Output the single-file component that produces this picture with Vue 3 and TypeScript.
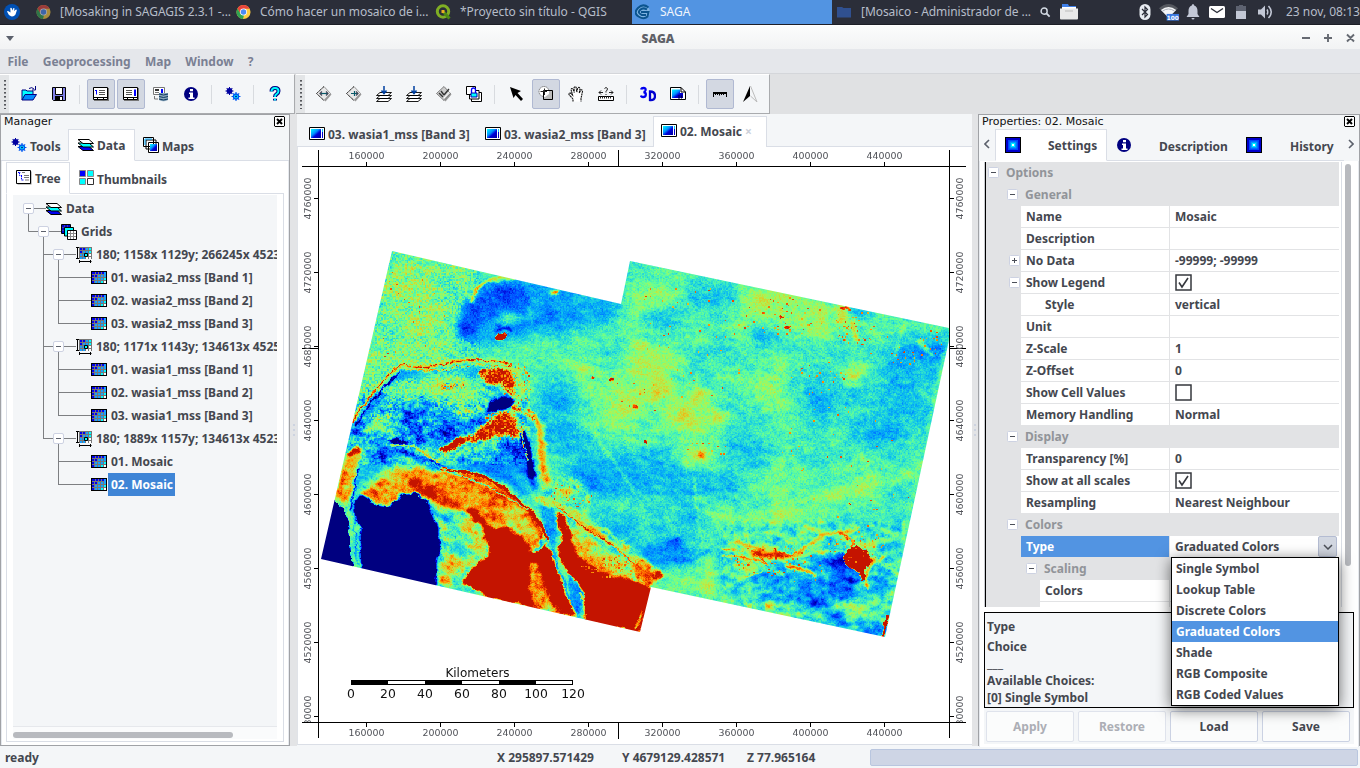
<script setup lang="ts">
import { onMounted, ref } from 'vue'

type Pt = [number, number]

/* ---------- window chrome data ---------- */
const menus = ['File', 'Geoprocessing', 'Map', 'Window', '?']

interface Tool { icon?: string; on?: boolean; sep?: boolean }
const sep: Tool = { sep: true }
const fileTools: Tool[] = [
  { icon: 'open' }, { icon: 'save' }, sep,
  { icon: 'mgr', on: true }, { icon: 'props', on: true }, { icon: 'source' }, { icon: 'info' }, sep,
  { icon: 'gears' }, sep, { icon: 'help' },
]
const mapTools: Tool[] = [
  { icon: 'prev' }, { icon: 'next' }, { icon: 'stack' }, { icon: 'stack' }, { icon: 'pick' }, { icon: 'sync' }, sep,
  { icon: 'arrow' }, { icon: 'zoomsel', on: true }, { icon: 'hand' }, { icon: 'measure' }, sep,
  { icon: 'threed' }, { icon: 'page' }, sep,
  { icon: 'ruler', on: true }, { icon: 'north' },
]

/* ---------- data tree ---------- */
interface Row { level: number; text: string; icon: string; box: boolean; v: string; selected?: boolean }
const rows: Row[] = []
function addRow(level: number, text: string, icon: string, box: boolean, v: string, selected = false) {
  rows.push({ level, text, icon, box, v, selected })
}
addRow(0, 'Data', 'layers', true, 'M15.5 12V23M20 11.500H33')
addRow(1, 'Grids', 'grids', true, 'M15.5 0V11.500H48M30.500 12V23')
const systems = [
  { name: '180; 1158x 1129y; 266245x 4523054y', items: ['01. wasia2_mss [Band 1]', '02. wasia2_mss [Band 2]', '03. wasia2_mss [Band 3]'] },
  { name: '180; 1171x 1143y; 134613x 4525934y', items: ['01. wasia1_mss [Band 1]', '02. wasia1_mss [Band 2]', '03. wasia1_mss [Band 3]'] },
  { name: '180; 1889x 1157y; 134613x 4523054y', items: ['01. Mosaic', '02. Mosaic'] },
]
systems.forEach((s, i) => {
  const last = i === systems.length - 1
  addRow(2, s.name, 'system', true, `M30.500 0V${last ? 12 : 23}M30.500 11.500H63M45.500 12V23`)
  s.items.forEach((t, j) => {
    const end = j === s.items.length - 1
    addRow(3, t, 'grid', false, `${last ? '' : 'M30.500 0V23'}M45.500 0V${end ? 12 : 23}M45.500 11.500H78`, last && end)
  })
})

/* ---------- property grid ---------- */
interface Prop { kind: 'cat' | 'row'; level: number; name: string; value?: string; box?: string; check?: boolean; indent?: boolean; selected?: boolean }
const props: Prop[] = [
  { kind: 'cat', level: 0, name: 'Options' },
  { kind: 'cat', level: 1, name: 'General' },
  { kind: 'row', level: 1, name: 'Name', value: 'Mosaic' },
  { kind: 'row', level: 1, name: 'Description' },
  { kind: 'row', level: 1, name: 'No Data', value: '-99999; -99999', box: '+' },
  { kind: 'row', level: 1, name: 'Show Legend', check: true, box: '-' },
  { kind: 'row', level: 1, name: 'Style', value: 'vertical', indent: true },
  { kind: 'row', level: 1, name: 'Unit' },
  { kind: 'row', level: 1, name: 'Z-Scale', value: '1' },
  { kind: 'row', level: 1, name: 'Z-Offset', value: '0' },
  { kind: 'row', level: 1, name: 'Show Cell Values', check: false },
  { kind: 'row', level: 1, name: 'Memory Handling', value: 'Normal' },
  { kind: 'cat', level: 1, name: 'Display' },
  { kind: 'row', level: 1, name: 'Transparency [%]', value: '0' },
  { kind: 'row', level: 1, name: 'Show at all scales', check: true },
  { kind: 'row', level: 1, name: 'Resampling', value: 'Nearest Neighbour' },
  { kind: 'cat', level: 1, name: 'Colors' },
  { kind: 'row', level: 1, name: 'Type', value: 'Graduated Colors', selected: true },
  { kind: 'cat', level: 2, name: 'Scaling' },
  { kind: 'row', level: 2, name: 'Colors' },
  { kind: 'row', level: 2, name: 'Value Range', box: '-' },
]
const choices = ['Single Symbol', 'Lookup Table', 'Discrete Colors', 'Graduated Colors', 'Shade', 'RGB Composite', 'RGB Coded Values']

/* ---------- map rulers (svg origin = page 297,147) ---------- */
const xTicks = [160000, 200000, 240000, 280000, 320000, 360000, 400000, 440000].map((v, i) => ({ v, x: 69.500 + i * 74 }))
const yTicks = [4760000, 4720000, 4680000, 4640000, 4600000, 4560000, 4520000, 4480000].map((v, i) => ({ v, y: 51.500 + i * 74 }))
const scaleTicks = [0, 20, 40, 60, 80, 100, 120].map((v, i) => ({ v, x: 54 + i * 37 }))

/* ---------- raster ---------- */
const raster = ref<HTMLCanvasElement | null>(null)
const W = 630
const H = 555
const OX = 319
const OY = 167

const stops: [number, number, number, number][] = [
  [0, 0, 0, 128], [0.1, 0, 0, 210], [0.2, 0, 70, 255], [0.3, 0, 145, 255], [0.38, 15, 195, 235],
  [0.46, 60, 235, 195], [0.53, 105, 255, 145], [0.61, 170, 245, 85], [0.7, 220, 205, 40],
  [0.78, 255, 155, 0], [0.87, 250, 90, 0], [0.94, 225, 40, 0], [1, 196, 20, 0],
]
function ramp(v: number): [number, number, number] {
  if (v <= 0) return [0, 0, 128]
  if (v >= 1) return [196, 20, 0]
  let i = 1
  while (stops[i][0] < v) i++
  const a = stops[i - 1], b = stops[i], t = (v - a[0]) / (b[0] - a[0])
  return [a[1] + (b[1] - a[1]) * t, a[2] + (b[2] - a[2]) * t, a[3] + (b[3] - a[3]) * t]
}
function hash(x: number, y: number, s: number): number {
  let h = (Math.imul(x, 374761393) + Math.imul(y, 668265263) + Math.imul(s, 1274126177)) | 0
  h = Math.imul(h ^ (h >>> 13), 1274126177)
  h = Math.imul(h ^ (h >>> 15), 2246822519)
  return ((h ^ (h >>> 16)) >>> 0) / 4294967295 - 0.5
}
function noise(x: number, y: number, s: number): number {
  const xi = Math.floor(x), yi = Math.floor(y)
  let u = x - xi, w = y - yi
  u = u * u * (3 - 2 * u)
  w = w * w * (3 - 2 * w)
  const a = hash(xi, yi, s), b = hash(xi + 1, yi, s), c = hash(xi, yi + 1, s), d = hash(xi + 1, yi + 1, s)
  return a + (b - a) * u + (c - a) * w + (a - b - c + d) * u * w
}

/* values -0.3 .. 1.3 are painted as grey levels and decoded afterwards */
const grey = (v: number, a = 1) => {
  const g = Math.round(((v + 0.3) / 1.6) * 255)
  return `rgba(${g},${g},${g},${a})`
}
const pts = (s: string): Pt[] => s.trim().split(' ').map(p => p.split(',').map(Number) as Pt)

function paint(c: CanvasRenderingContext2D) {
  const area = (s: string, v: number, blur = 1, a = 1) => {
    c.filter = blur ? `blur(${blur}px)` : 'none'
    c.fillStyle = grey(v, a)
    c.beginPath()
    pts(s).forEach(([x, y], i) => (i ? c.lineTo(x, y) : c.moveTo(x, y)))
    c.closePath()
    c.fill()
  }
  const line = (s: string, v: number, w: number, blur = 0.5, a = 1) => {
    c.filter = blur ? `blur(${blur}px)` : 'none'
    c.strokeStyle = grey(v, a)
    c.lineWidth = w
    c.lineJoin = c.lineCap = 'round'
    const p = pts(s)
    c.beginPath()
    c.moveTo(p[0][0], p[0][1])
    for (let i = 1; i < p.length - 1; i++) {
      c.quadraticCurveTo(p[i][0], p[i][1], (p[i][0] + p[i + 1][0]) / 2, (p[i][1] + p[i + 1][1]) / 2)
    }
    c.lineTo(p[p.length - 1][0], p[p.length - 1][1])
    c.stroke()
  }
  const spot = (x: number, y: number, rx: number, ry: number, v: number, blur = 5, a = 1, rot = 0) => {
    c.filter = blur ? `blur(${blur}px)` : 'none'
    c.fillStyle = grey(v, a)
    c.beginPath()
    c.ellipse(x, y, rx, ry, rot, 0, 7)
    c.fill()
  }

  c.filter = 'none'
  c.fillStyle = grey(0.485)
  c.fillRect(OX, OY, W, H)

  // eastern plain
  spot(655, 365, 28, 22, 0.6, 9); spot(640, 352, 10, 12, 0.68, 6); spot(625, 405, 24, 22, 0.6, 9)
  spot(690, 415, 32, 26, 0.59, 9); spot(684, 412, 8, 10, 0.7, 4); spot(660, 390, 12, 12, 0.66, 6)
  spot(700, 395, 12, 6, 0.66, 4); spot(722, 416, 12, 4, 0.68, 3); spot(695, 457, 22, 10, 0.62, 6)
  spot(745, 325, 18, 20, 0.58, 8); spot(780, 303, 40, 14, 0.62, 7, 1, 0.2); spot(820, 318, 30, 20, 0.59, 8)
  spot(770, 385, 16, 28, 0.57, 8, 1, 0.5); spot(660, 290, 30, 14, 0.56, 8); spot(582, 370, 16, 14, 0.58, 7)
  spot(635, 310, 12, 30, 0.54, 8)
  spot(660, 320, 22, 9, 0.4, 7); spot(710, 300, 26, 10, 0.42, 7); spot(762, 338, 12, 8, 0.36, 6)
  spot(555, 400, 22, 30, 0.38, 9); spot(565, 435, 22, 24, 0.38, 9); spot(595, 480, 34, 26, 0.36, 10)
  spot(645, 475, 40, 24, 0.36, 10); spot(700, 487, 40, 18, 0.37, 9); spot(745, 450, 20, 16, 0.39, 8)
  spot(850, 400, 50, 20, 0.41, 10, 1, -0.3); spot(875, 430, 24, 16, 0.34, 8); spot(915, 360, 36, 26, 0.37, 9)
  spot(820, 395, 20, 12, 0.37, 7); spot(938, 352, 10, 12, 0.28, 5); spot(855, 374, 14, 8, 0.62, 4, 1, -0.7)
  spot(625, 530, 50, 22, 0.42, 10); spot(910, 400, 30, 24, 0.38, 8)
  spot(720, 520, 26, 12, 0.56, 7); spot(780, 515, 50, 9, 0.57, 7, 1, -0.15)
  spot(850, 490, 46, 7, 0.62, 6, 1, -0.3); spot(905, 475, 24, 5, 0.6, 4, 1, -0.35); spot(690, 515, 18, 14, 0.38, 6)
  line('845,300 842,325', 0.68, 3, 2, 0.8); line('905,325 898,345 894,360', 0.66, 2, 1.5, 0.7)
  line('918,340 928,350 932,356', 0.68, 2.5, 1.5, 0.8); line('852,322 857,340', 0.74, 3, 1.5)
  spot(842, 310, 6, 12, 0.68, 3); spot(845, 308, 4, 2, 0.98, 0.6); spot(862, 312, 12, 5, 0.33, 3)
  line('590,425 605,450 640,500 650,530', 0.52, 1.5, 0.8); line('695,480 698,530 708,560 710,590', 0.58, 1.5, 0.8)
  line('700,495 720,530 750,570 790,605', 0.56, 3, 2); line('948,345 935,400 915,485 890,600', 0.54, 3, 2)
  spot(787, 327, 3, 2, 0.97, 0.5); spot(782, 317, 2, 2, 0.95, 0.5); spot(593, 378, 2, 1, 1, 0.4); spot(612, 380, 3, 1.5, 1, 0.4)
  spot(635, 406, 2.500, 1.500, 0.92, 0.6); spot(645, 441, 2, 2, 1, 0.5); spot(702, 455, 4, 3, 0.84, 1.2); spot(850, 504, 1.500, 1.500, 1, 0.3)

  // south-eastern hills
  spot(670, 555, 28, 14, 0.34, 5); spot(676, 542, 8, 5, 0.2, 3); line('650,545 665,560 690,562 710,550', 0.25, 2, 1.5)
  spot(708, 580, 10, 18, 0.62, 5); spot(685, 580, 22, 8, 0.52, 5); spot(740, 562, 14, 20, 0.56, 6)
  spot(800, 580, 45, 22, 0.36, 7); spot(842, 575, 20, 24, 0.19, 5); spot(815, 602, 17, 8, 0.19, 4)
  spot(838, 615, 8, 12, 0.22, 4); spot(880, 575, 14, 20, 0.35, 5); spot(874, 630, 16, 7, 0.22, 4)
  spot(822, 580, 8, 14, 0.4, 4, 1, 0.6)
  spot(852, 608, 20, 5, 0.62, 3, 1, 0.1); line('765,585 790,605 795,612', 0.42, 4, 3); spot(770, 605, 6, 4, 0.75, 2)
  area('745,552 758,548 775,549 788,556 785,562 765,560', 0.76, 2)
  line('730,543 750,542 757,552 790,558 810,545 825,533 850,532 858,528', 0.76, 3, 0.8)
  line('755,554 775,556 786,555', 0.98, 4, 1); line('775,549 776,560', 0.95, 2, 0.6)
  line('752,551 762,560 768,564', 0.9, 2, 0.5); line('780,552 786,558 795,552', 0.86, 2, 0.6)
  line('790,557 825,550 845,552', 0.74, 2, 0.8); line('787,567 805,568 815,575', 0.9, 3, 0.8)
  line('722,555 755,558 765,565', 0.78, 1.4, 0.4); line('740,570 765,566 785,575', 0.64, 1.5, 0.8)
  line('745,576 762,571', 0.7, 1.2, 0.4); line('735,565 752,561', 0.72, 1.2, 0.4); line('722,548 742,552', 0.74, 1.2, 0.4)
  line('840,540 855,545 872,540 885,532', 0.6, 3, 2); line('855,550 885,540 900,535', 0.62, 4, 2)
  line('838,532 852,536 852,548', 0.85, 1.5, 0.5)
  area('845,552 850,548 856,546 862,550 868,551 869,556 873,560 867,566 864,570 864,580 861,580 859,572 853,570 845,563 843,558', 1.25, 0.6)
  line('868,558 877,556 868,568 864,580 868,588', 0.85, 2.5, 0.8); line('872,562 878,562 884,556', 0.9, 2, 0.8)
  line('875,560 890,565 897,573', 0.63, 3, 1.5)

  // north-western plain and lake
  area('392,251 470,268 466,300 452,345 430,366 365,390 350,420 340,440', 0.54, 4)
  spot(405, 300, 16, 30, 0.57, 8); spot(430, 310, 20, 20, 0.57, 8)
  area('475,285 500,276 560,278 600,288 620,303 612,328 585,325 560,332 525,335 495,345 462,338 460,315', 0.35, 6)
  area('466,302 495,287 530,292 535,325 515,328 500,318 478,322 470,338 460,335', 0.24, 4)
  line('480,285 510,288 530,300 535,325', 0.2, 4, 3); spot(505, 297, 14, 5, 0.19, 4); spot(465, 325, 4, 12, 0.18, 3)
  spot(510, 318, 14, 5, 0.54, 3); spot(530, 316, 5, 8, 0.44, 3); spot(545, 313, 12, 6, 0.26, 4)
  line('470,302 475,290 490,279 515,278', 0.72, 3, 1.2); spot(555, 292, 4, 2, 0.85, 1)
  line('495,330 503,326 512,330', 0.06, 2.5, 1); spot(501, 336, 6, 3, 1.3, 0.5, 1, -0.2)

  // wetland
  area('375,395 410,372 480,368 520,375 530,410 530,460 505,480 450,470 400,440 345,455', 0.42, 5)
  line('345,430 365,395 405,372 430,375 480,372', 0.28, 6, 3)
  spot(450, 388, 34, 12, 0.62, 6); spot(400, 390, 20, 8, 0.58, 5); spot(460, 400, 20, 8, 0.56, 5)
  spot(370, 408, 5, 20, 0.23, 4, 1, 0.6); spot(355, 430, 7, 12, 0.2, 4, 1, 0.6)
  spot(380, 420, 12, 8, 0.46, 5)
  area('395,425 412,408 440,405 490,418 500,400 515,398 512,410 485,430 445,445 430,450 415,435', 0.28, 5)
  spot(408, 415, 4, 12, 0.14, 3, 1, 0.5); spot(420, 438, 5, 7, 0.1, 3); spot(450, 428, 14, 4, 0.14, 3)
  spot(430, 420, 9, 4, 0.42, 3); spot(465, 413, 14, 5, 0.46, 3); spot(425, 410, 3, 8, 0.17, 2, 1, 0.7)
  spot(440, 408, 12, 4, 0.46, 3)
  line('355,427 372,400 398,372', 0.05, 1.8, 0.6)
  line('350,425 372,392 397,366 410,365 425,369 445,363 472,360 500,361 522,370', 0.65, 4.5, 1.8)
  line('352,423 374,390 398,364 410,365 425,369 445,363 472,360 500,361 512,365', 0.98, 1.2, 0.2)
  line('405,369 430,373 470,364 505,366', 0.75, 1, 0.4)
  area('483,368 510,370 515,378 514,395 508,392 500,384 486,383 478,372', 0.98, 1.5)
  area('490,402 500,398 513,399 513,406 500,409 486,414', -0.1, 1.2)
  line('513,372 522,382 521,398 514,410', 0.68, 5, 2.5); line('508,385 514,395', 0.92, 5, 1.5)
  area('440,453 452,442 468,437 480,430 491,420 499,411 511,412 516,426 523,440 505,434 488,439 465,443 450,452', 1.0, 1.5)
  line('443,450 455,444 463,440', 1.25, 5, 0.8)
  area('495,442 520,440 528,460 532,485 518,470 500,455', 0.22, 4); line('505,440 520,455', 0.08, 3, 2)
  line('522,434 528,448 530,470 532,476', -0.15, 6, 1.2); line('530,470 535,488', 0.1, 4, 2)
  line('519,425 524,442 527,460', 0.7, 1.5, 0.5)
  line('515,408 530,412 540,425 542,445 542,470 549,482', 0.72, 6.5, 1.8); line('532,414 541,428 541,465', 0.82, 2.5, 1.2)
  area('455,462 500,458 520,480 535,505 520,492 500,480 480,473', 0.3, 3)
  line('450,456 490,452', 0.42, 6, 3)
  spot(370, 460, 10, 18, 0.38, 4); spot(390, 452, 22, 5, 0.25, 3); spot(383, 458, 5, 4, 0.08, 2); spot(398, 442, 9, 2.5, 0.04, 1)
  line('404,452 425,460 440,468 470,474', 0.14, 5, 2); spot(398, 463, 14, 3, 0.32, 2)
  line('392,446 405,443 420,451 437,463', 0.68, 1.6, 0.6)

  // coast
  area('350,440 372,445 380,470 362,500 340,505', 0.38, 4)
  area('343,462 352,450 362,448 358,470 352,490 347,508 336,499', 0.74, 2); spot(354, 452, 8, 3, 1.1, 1, 1, -0.5)
  line('338,495 344,475 350,460', 0.86, 3, 1.2)
  area('360,494 385,476 402,468 420,467 440,475 470,473 500,484 522,502 540,522 548,540 540,552 520,545 495,530 470,513 440,506 420,497 402,494 390,507 375,503', 0.82, 2)
  line('362,488 385,472 405,467', 0.6, 5, 2.5); line('435,474 460,472', 0.7, 5, 2)
  spot(395, 483, 14, 7, 0.72, 4); spot(410, 480, 8, 5, 0.88, 3); spot(470, 478, 12, 3, 0.88, 2)
  area('428,500 470,513 488,530 486,548 478,562 455,577 436,586 440,540', 0.56, 2.5)
  line('430,508 450,522', 0.15, 3, 2); spot(460, 550, 7, 9, 0.37, 3); spot(470, 527, 9, 12, 0.64, 4)
  spot(452, 565, 9, 7, 0.85, 3, 1, -0.6); spot(445, 580, 7, 4, 0.8, 2); spot(438, 545, 2, 14, 0.6, 2)
  area('475,508 482,524 492,530 507,527 523,538 535,552 543,546 552,552 566,590 575,617 530,607 490,598 462,582 470,570 488,556 490,545 482,536 488,530', 1.22, 1.2)
  area('408,480 420,480 440,496 466,508 450,508 425,497', 1.06, 3); line('470,512 482,520 488,532', 1.15, 8, 1.5)
  area('505,504 520,508 535,528 540,542 525,540 508,528', 0.66, 3)
  line('523,504 535,518 542,535 546,550', 0.98, 2.5, 1)
  area('528,562 536,560 546,590 557,612 532,607', 0.76, 2.5); spot(550, 612, 12, 3, 0.6, 2)
  area('539,501 553,509 557,525 556,545 551,551 547,541 543,520', 0.31, 1.5)
  line('534,552 546,538', 0.2, 2.5, 0.8); line('536,545 530,552', 0.7, 2, 0.8)
  line('440,468 470,472 497,483 517,498 538,520 548,538', 1.2, 2.6, 0.4); line('430,464 470,478 510,498 528,510', 0.42, 1.2, 0.5)
  area('556,511 566,519 571,535 578,553 600,571 625,576 652,588 641,633 586,621 583,590 568,573 558,555 562,537', 1.2, 1.2)
  area('570,525 600,545 635,570 625,578 600,572 583,560 573,545', 0.66, 2); line('576,545 595,567 625,578', 0.86, 5, 2)
  line('552,550 558,568 566,590 577,613', 0.32, 3, 0.6); line('551,552 561,580 573,612', 0.68, 1.3, 0.4)
  area('567,574 578,583 583,592 580,610 577,618 570,590', 0.3, 1.2); line('580,593 583,605 587,618', 0.68, 2, 0.6)
  line('540,500 560,502 577,520 600,536 622,548 640,566 655,572', 0.7, 7, 2)
  line('556,506 577,523 602,538 620,550 634,567 648,572', 0.95, 1.3, 0.4); line('585,518 610,533 628,548', 0.78, 2, 1)
  line('543,485 555,482 565,474 571,484 582,485 590,502 583,512', 0.68, 3, 2); spot(563, 492, 16, 11, 0.57, 5)
  area('630,565 645,560 652,565 655,578 648,586 638,580', 0.88, 1.6); spot(657, 576, 5, 4, 1.02, 1)
  line('636,630 642,612', 0.65, 3, 1)

  // open water and the channel between the basins
  area('335,501 343,508 349,522 350,545 353,570 318,562 318,540', -0.3, 0.7)
  area('353,503 362,496 374,504 388,507 392,502 399,500 402,494 417,493 427,502 433,516 438,527 439,550 436,562 435,590 362,572 360,540 361,527 355,520 352,511', -0.3, 0.8)
  line('365,455 356,480 352,500 354,520 357,545 358,570', 0.42, 3.5, 0.8); line('358,470 353,495 351,512', 0.12, 1.6, 0.5)
  line('354,520 357,545 357,565', 0.25, 1, 0.3)
  line('882,640 888,616', 1.25, 2, 0.3)
}

onMounted(() => {
  const cv = raster.value!
  const out = cv.getContext('2d')!
  const src = document.createElement('canvas')
  src.width = W
  src.height = H
  const c = src.getContext('2d', { willReadFrequently: true })!
  c.translate(-OX, -OY)
  paint(c)
  const g = c.getImageData(0, 0, W, H).data
  const img = out.createImageData(W, H)
  const clusters: [number, number, number, number, number][] = [
    [785, 315, 40, 20, 0.03], [855, 325, 20, 22, 0.06], [905, 345, 40, 22, 0.02], [820, 378, 30, 18, 0.03],
    [840, 445, 60, 40, 0.008], [705, 450, 24, 10, 0.05], [690, 340, 60, 60, 0.006], [650, 385, 40, 40, 0.008],
    [860, 500, 50, 30, 0.008], [770, 560, 40, 15, 0.07], [855, 545, 30, 18, 0.05], [400, 320, 45, 50, 0.008],
    [515, 385, 16, 24, 0.1], [500, 425, 25, 16, 0.12], [610, 566, 30, 12, 0.12], [570, 495, 22, 14, 0.05],
    [665, 295, 30, 15, 0.012], [800, 565, 60, 20, 0.015],
  ]
  const inside = (X: number, Y: number, x0: number, y0: number, x1: number, y1: number) => X > x0 && X < x1 && Y > y0 && Y < y1
  for (let y = 0; y < H; y++) {
    for (let x = 0; x < W; x++) {
      const X = x + OX, Y = y + OY
      const dx = noise(X / 6, Y / 6, 1) * 3 + noise(X / 2, Y / 2, 3) * 1.8
      const dy = noise(X / 6, Y / 6, 2) * 3 + noise(X / 2, Y / 2, 4) * 1.8
      const sx = Math.min(W - 1, Math.max(0, Math.round(x + dx)))
      const sy = Math.min(H - 1, Math.max(0, Math.round(y + dy)))
      let v = (g[(sy * W + sx) * 4] / 255) * 1.6 - 0.3
      const bx = Math.floor(X / 1.5), by = Math.floor(Y / 1.5)
      const wet = v > 0.02 && v < 0.5 && inside(X, Y, 340, 380, 530, 465) ? 1 : 0
      const plain = v > 0.4 && v < 0.7 && X < 480 && Y < 420 ? 1 : 0
      const ragged = v > 0.6 && v < 1.1 && inside(X, Y, 440, 360, 535, 458) ? 1 : 0
      const sand = v > 0.5 && v < 1.12 && inside(X, Y, 330, 465, 660, 635) ? 1 : 0
      const hills = v > 0.15 && inside(X, Y, 720, 520, 905, 635) ? 1 : 0
      v += noise(X / 28, Y / 22, 5) * 0.08
      v += noise((X + Y * 0.6) / 11, (Y - X * 0.3) / 5, 6) * (0.09 + wet * 0.12 + sand * 0.12 + hills * 0.1)
      v += noise(X / 3.500, Y / 3.500, 7) * (0.06 + wet * 0.14 + ragged * 0.25 + sand * 0.14 + hills * 0.1)
      v += hash(bx, by, 8) * (0.09 + (wet + plain) * 0.1 + ragged * 0.35) + hash(X, Y, 9) * (0.05 + sand * 0.06)
      if (v > 0.3) {
        for (const k of clusters) {
          const qx = (X - k[0]) / k[2], qy = (Y - k[1]) / k[3]
          if (qx * qx + qy * qy < 1 && hash(bx, by, 21) + 0.5 < k[4]) { v = 0.7 + (hash(bx, by, 22) + 0.5) * 0.22; break }
        }
      }
      const o = (y * W + x) * 4
      const [r, gg, b] = ramp(v)
      img.data[o] = r
      img.data[o + 1] = gg
      img.data[o + 2] = b
      img.data[o + 3] = 255
    }
  }
  // keep only the footprint of the two scenes
  const tmp = document.createElement('canvas')
  tmp.width = W
  tmp.height = H
  tmp.getContext('2d')!.putImageData(img, 0, 0)
  out.translate(-OX, -OY)
  out.beginPath()
  pts('392,251 621,304 630,261 949,328 949,340 885,637 651,587 640,632 321,559').forEach(([x, y], i) => (i ? out.lineTo(x, y) : out.moveTo(x, y)))
  out.closePath()
  out.clip()
  out.drawImage(tmp, OX, OY)
})
</script>

<template>
  <svg class="defs" width="0" height="0">
    <defs>
      <linearGradient id="gBlue" x1="0" y1="0" x2="1" y2="1"><stop offset="0" stop-color="#0ff" /><stop offset=".4" stop-color="#0090ff" /><stop offset=".6" stop-color="#0000d8" /><stop offset="1" stop-color="#0000a0" /></linearGradient>
      <g id="gear"><circle r="2.700" fill="none" stroke="currentColor" stroke-width="1.500" /><path d="M0-4.700V-2.500M0 4.700V2.500M-4.700 0H-2.500M4.700 0H2.500M-3.300-3.300L-2-2M3.300 3.300L2 2M3.300-3.300L2-2M-3.300 3.300L-2 2" stroke="currentColor" stroke-width="1.200" /></g>
      <symbol id="open" viewBox="0 0 16 16"><path d="M1 14V4h4l1 1h6v4" fill="#0ff" stroke="#000080" /><path d="M1 14L4 8.500H15.500L12 14Z" fill="#08f" stroke="#000080" /><path d="M8 2.500q3-2 5 .5M14.500 0V4H11" fill="none" stroke="#000080" /></symbol>
      <symbol id="save" viewBox="0 0 16 16"><path d="M1.500 1.500H14.500V14.500H2.500L1.500 13.500Z" fill="#8080e8" stroke="#000" /><path d="M4.500 1.500H11.500V8.500H4.500Z" fill="#fff" stroke="#000" /><path d="M4 10h8v4.500H4z" fill="#000" /><path d="M9 11h2v3H9z" fill="#fff" /></symbol>
      <symbol id="mgr" viewBox="0 0 16 16"><path d="M1 2h15v13H1z" fill="#777" /><path d="M.5 1.500H14.500V13.500H.5Z" fill="#fff" stroke="#000" stroke-width="1" /><path d="M.5 11.500H14.500M4.500 11.500v2M10.500 11.500v2" stroke="#000" /><path d="M2 4.500H4M3.500 4.500V8.500" stroke="#00f" /><path d="M6 4.500H12M6 6.500H12M6 8.500H12" stroke="#555" /></symbol>
      <symbol id="props" viewBox="0 0 16 16"><path d="M1 2h15v13H1z" fill="#777" /><path d="M.5 1.500H14.500V13.500H.5Z" fill="#fff" stroke="#000" stroke-width="1" /><path d="M.5 11.500H14.500M4.500 11.500v2M10.500 11.500v2" stroke="#000" /><path d="M11 3.500h2V10h-2z" fill="#00f" /><path d="M3 4.500H9M3 6.500H9M3 8.500H9" stroke="#555" /></symbol>
      <symbol id="source" viewBox="0 0 16 16"><path d="M.5 1.500H11.500V8.500H.5Z" fill="#fff" stroke="#777" /><path d="M2 3h4v2H2z" fill="#333" /><path d="M2 6.500h4" stroke="#777" /><path d="M8 3h2v4H8z" fill="#00f" /><path d="M6 7h9v7q-4.500 2.500-9 0z" fill="#8aa6bc" /><path d="M6 8q4.500 2 9 0M6 10.500q4.500 2 9 0M6 13q4.500 2 9 0" fill="none" stroke="#103a60" /><path d="M1.500 10v3H5" fill="none" stroke="#777" /></symbol>
      <symbol id="info" viewBox="0 0 16 16"><circle cx="8" cy="8" r="7" fill="#000080" /><path d="M7 3h3v2.200H7zM6 6.500h4v5h1.500V13H5.500v-1.500H7V8H6z" fill="#fff" /></symbol>
      <symbol id="gears" viewBox="0 0 16 16"><g transform="translate(4.500 5) scale(.85)"><use href="#gear" color="#0000a0" /><circle r="2.800" fill="#0000a0" /></g><g transform="translate(11 10.500) scale(.95)"><circle r="2.700" fill="#0ff" /><use href="#gear" color="#0058f0" /><circle r="1" fill="#00a" /></g></symbol>
      <symbol id="help" viewBox="0 0 16 16"><path d="M4.500 5.500Q4.500 2 8 2T11.500 5Q11.500 7 9.500 8.200 8 9 8 11M8 12.800v1.700" fill="none" stroke="#000080" stroke-width="4" /><path d="M4.500 5.500Q4.500 2 8 2T11.500 5Q11.500 7 9.500 8.200 8 9 8 11M8 12.800v1.700" fill="none" stroke="#0ff" stroke-width="1.900" /></symbol>
      <symbol id="prev" viewBox="0 0 16 16"><path d="M9 2L15.500 8.500 9.500 15.500 3 9" fill="#999" /><path d="M8 .5L14.500 7.500 8 14.500 .5 7.500Z" fill="#e8e8e8" stroke="#888" stroke-width=".8" /><path d="M8 .5L.5 7.500 8 14.500" fill="none" stroke="#222" stroke-dasharray="1.200 .8" /><path d="M4 7.500H12" stroke="#0a5a6a" stroke-width="1.200" /><path d="M6 5.500L4 7.500 6 9.500M10 5.500L12 7.500 10 9.500" fill="none" stroke="#445" stroke-width="1.200" /></symbol>
      <symbol id="next" viewBox="0 0 16 16"><path d="M9 2L15.500 8.500 9.500 15.500 3 9" fill="#999" /><path d="M8 .5L14.500 7.500 8 14.500 .5 7.500Z" fill="#e8e8e8" stroke="#888" stroke-width=".8" /><path d="M8 .5L.5 7.500 8 14.500" fill="none" stroke="#222" stroke-dasharray="1.200 .8" /><path d="M5 7.500H12M8.500 5v5" stroke="#0a5a6a" stroke-width="1.200" /><path d="M10 5.500L12 7.500 10 9.500" fill="none" stroke="#445" stroke-width="1.200" /></symbol>
      <symbol id="stack" viewBox="0 0 16 16"><path d="M.5 15.500L4 12.500H15.500L12 15.500ZM.5 12.500L4 9.500H15.500L12 12.500ZM.5 9.500L4 6.500H15.500L12 9.500Z" fill="#fff" stroke="#000" stroke-width=".9" /><path d="M8 0V6M5.500 4.500L8 7.500 10.500 4.500" fill="none" stroke="#0040a0" stroke-width="1.500" /></symbol>
      <symbol id="pick" viewBox="0 0 16 16"><path d="M9 2L15.500 8.500 9.500 15.500 3 9" fill="#999" /><path d="M8 .5L14.500 7.500 8 14.500 .5 7.500Z" fill="#ccc" stroke="#666" stroke-width=".8" /><path d="M3 7l4 4M5 5l3 4M8 9L13 3" stroke="#333" stroke-width="1.400" /><path d="M8 12L15 4" stroke="#fff" /></symbol>
      <symbol id="sync" viewBox="0 0 16 16"><path d="M5.500 6.500H15.500V15.500H5.500Z" fill="#fff" stroke="#000" /><path d="M3.500 4.500H13V13H3.500Z" fill="#fff" stroke="#000" /><path d="M.5.500H9.500V8.500H.5Z" fill="#fff" stroke="#000" /><path d="M5.500 7V4q0-2 2-2t2 2v3" fill="none" stroke="#00f" stroke-width="1.300" /><path d="M5 7h6v4H5z" fill="#0ff" stroke="#0000b0" /></symbol>
      <symbol id="arrow" viewBox="0 0 16 16"><path d="M2 1L13 5 9.500 7 15 13 13 15 7.500 9 5.500 12Z" fill="#000" /></symbol>
      <symbol id="zoomsel" viewBox="0 0 16 16"><circle cx="6" cy="5.500" r="5" fill="#fff" stroke="#777" stroke-dasharray="1.500 .6" /><path d="M5.500 4.500H14.500V13.500H5.500Z" fill="#bbb" stroke="#000" /><path d="M6 5h5v3l-4 3H6z" fill="#fff" /><path d="M2.500 5.500H9M6.500 2.500V9" stroke="#222" /></symbol>
      <symbol id="hand" viewBox="0 0 16 16"><path d="M5 15.500V13L1 8.500Q.5 7 2.500 7L4.500 9 3 3.500Q3.500 1.800 5 3L6.300 6.500 6 1.800Q7 0 8.200 1.500L8.800 6 9.800 1.800Q11.300.8 12 2.500L11.300 7 12.800 4Q14.500 3.500 14.500 5.300L13 12.500V15.500" fill="#fff" stroke="#111" stroke-width="1.100" stroke-dasharray="2 .5" /></symbol>
      <symbol id="measure" viewBox="0 0 16 16"><path d="M.5 10.500H15.500V14.500H.5Z" fill="#fff" stroke="#000" /><path d="M2.500 10.500v2M4.500 10.500v2M6.500 10.500v2M8.500 10.500v2M10.500 10.500v2M12.500 10.500v2M1 6.500H5M11 6.500H15M3 4.500L1 6.500 3 8.500M13 4.500L15 6.500 13 8.500M6.500 2.500Q8 .5 9.500 2.500 9.500 4 8 5.500v1M8 8v1" fill="none" stroke="#222" /></symbol>
      <symbol id="threed" viewBox="0 0 16 16"><path d="M1 3.500Q1.500 2 3.500 2 6 2 5.500 4.200 5 6 3.500 6 6 6.500 5.800 8.800 5.500 11 3 11 1.300 11 .8 9.500" fill="none" stroke="#0000f0" stroke-width="2.300" /><path d="M10 5.500v8.500q5 .5 5-4T10 5.500Z" fill="none" stroke="#0000d0" stroke-width="2.300" /></symbol>
      <symbol id="page" viewBox="0 0 16 16"><path d="M.5 1.500H11L15.500 6V13.500H.5Z" fill="#fff" stroke="#000" /><path d="M2 3.500h8V7h3v5H2z" fill="url(#gBlue)" /><path d="M11 1.500V6h4.500" fill="none" stroke="#000" /><path d="M11.500 9.500v3M9 13V9" stroke="#004" /></symbol>
      <symbol id="ruler" viewBox="0 0 16 16"><path d="M1.500 6v5M3.500 7v2M5.500 7v2M7.500 7v2.500M9.500 7v2M11.500 7v2M14.500 6v5" stroke="#000" /><path d="M1 6h14v2H1z" fill="#000" /></symbol>
      <symbol id="north" viewBox="0 0 16 16"><path d="M8 0V10L1 16Z" fill="#000" /><path d="M8.500 0L15 16 8.500 10" fill="none" stroke="#bbb" /></symbol>
      <symbol id="layers" viewBox="0 0 16 16"><path d="M0 9.500H11L15.500 13.500H5Z" fill="#0000f0" stroke="#000" /><path d="M0 6H11L15.500 10H5Z" fill="#0ff" stroke="#000" /><path d="M0 2.500H11L15.500 6.500H5Z" fill="#fff" stroke="#000" /></symbol>
      <symbol id="maps" viewBox="0 0 16 16"><path d="M.5.500H10.500V9.500H.5ZM3 3H13V12H3ZM5.500 5.500H15.500V15.500H5.500Z" fill="#fff" stroke="#000" /><path d="M7 7h7v7h-7z" fill="url(#gBlue)" /><path d="M2 8V2h7" fill="none" stroke="#0af" /></symbol>
      <symbol id="tree" viewBox="0 0 16 16"><path d="M1.500 1.500h14v13h-14z" fill="#888" /><path d="M.5.500H14.500V13.500H.5Z" fill="#fff" stroke="#000" /><path d="M2 2.500H4.500M3.500 2.500V5.500H6M5.500 5.500V10H8" stroke="#00f" fill="none" stroke-dasharray="1.500 .7" /><path d="M6 2.500h3M8 5.500h5M8 7.500h5M9 10h4" stroke="#777" /></symbol>
      <symbol id="thumbs" viewBox="0 0 16 16"><path d="M.5.500h6v6h-6z" fill="#00f" stroke="#888" /><path d="M8.500.500h6v6h-6z" fill="#0ff" stroke="#888" /><path d="M.5 8.500h6v6h-6z" fill="#0ff" stroke="#888" /><path d="M8.500 8.500h6v6h-6z" fill="#fff" stroke="#333" /></symbol>
      <symbol id="grid" viewBox="0 0 16 13"><path d="M0 0h16v13H0z" fill="#000" /><path d="M1 1h14v11H1z" fill="#777" /><path d="M1 1h3v2H1zM5 1h2v2H5zM8 1h2v2H8zM11 1h2v2h-2zM1 4h2v2H1zM4 4h2v2H4zM1 7h2v2H1zM1 10h2v2H1z" fill="#00e" /><path d="M7 4h2v2H7zM10 4h2v2h-2zM4 7h2v2H4zM7 7h2v2H7zM10 7h2v2h-2zM4 10h2v2H4zM7 10h2v2H7zM13 1h2v5h-2z" fill="#18a0ff" /><path d="M13 7h2v2h-2zM10 10h2v2h-2z" fill="#0ff" /><path d="M13 10h2v2h-2z" fill="#fff" /></symbol>
      <symbol id="grids" viewBox="0 0 16 16"><path d="M.5.500H9.500V9.500H.5Z" fill="#00c" stroke="#000" /><path d="M1 3.500H9M1 6.500H9M3.500 1V9M6.500 1V9" stroke="#55a" stroke-width=".7" /><path d="M3.500 3.500H12.500V12H3.500Z" fill="#0ff" stroke="#000" /><path d="M6.500 6.500H15.500V15.500H6.500Z" fill="#fff" stroke="#000" /><path d="M7 9.500H15M7 12.500H15M9.500 7V15M12.500 7V15" stroke="#888" /></symbol>
      <symbol id="system" viewBox="0 0 16 16"><path d="M3 0h13v12H3z" fill="#777" /><path d="M4 1h2v2H4zM7 1h2v2H7zM4 4h2v2H4z" fill="#00e" /><path d="M10 1h2v2h-2zM7 4h2v2H7zM10 4h2v2h-2zM4 7h2v2H4zM4 10h2v2H4zM7 10h2v2H7zM7 7h2v2H7z" fill="#18a0ff" /><path d="M13 1h2v2h-2zM13 4h2v2h-2z" fill="#0ff" /><path d="M13 7h2v2h-2zM13 10h2v2h-2zM10 10h2v2h-2z" fill="#fff" /><path d="M8.500 6.500h3v3h-3z" fill="#0ff" stroke="#000" /><path d="M1.500 0V12M0 .500H3M0 11.500H3M3 14.500H15.500M3.500 13v3M14.500 13v3" stroke="#000" fill="none" /></symbol>
      <symbol id="mapview" viewBox="0 0 16 13"><path d="M.5.500H15.500V12.500H.5Z" fill="#fff" stroke="#000" /><path d="M2 2h10v9H2z" fill="url(#gBlue)" /><path d="M13 2h1v3h-1z" fill="#0cf" /><path d="M13 5h1v6h-1z" fill="#00c" /></symbol>
      <symbol id="glow" viewBox="0 0 16 16"><path d="M0 0h16v16H0z" fill="#000" /><path d="M1 1h14v14H1z" fill="#00c" /><path d="M3 3h10v10H3z" fill="#04f" /><path d="M4.500 4.500h7v7h-7z" fill="#09f" /><path d="M6 6h4v4H6z" fill="#0ef" /><path d="M7 7h2v2H7z" fill="#fff" /></symbol>
      <symbol id="close" viewBox="0 0 11 11"><path d="M1 .5H10L10.500 1V10L10 10.500H1L.5 10V1Z" fill="#fff" stroke="#000" /><path d="M3 3L8 8M8 3L3 8" stroke="#000" stroke-width="2" /></symbol>
      <symbol id="chrome" viewBox="0 0 16 16"><circle cx="8" cy="8" r="7.500" fill="#ffcd40" /><path d="M1.500 4.200A7.500 7.500 0 0 1 14.500 4.500H8L4.800 9.800Z" fill="#e8453c" /><path d="M1.500 4.200L5 10 8.500 11.500 7.500 15.500A7.500 7.500 0 0 1 1.500 4.200Z" fill="#30a352" /><circle cx="8" cy="8" r="3.700" fill="#fff" /><circle cx="8" cy="8" r="2.900" fill="#4a8af4" /></symbol>
    </defs>
  </svg>

  <div class="screen">
    <header class="taskbar">
      <svg class="whisker" viewBox="0 0 16 16"><circle cx="8" cy="8" r="8" fill="#0050b4" /><path d="M3 7.500Q3.500 6.500 4.500 7.200L6.500 8.500 6.300 4Q7.200 3.200 7.800 4.200L8.200 6.500 9.500 4Q10.500 3.700 10.500 4.800L10 7 12 5.500Q13 5.500 12.800 6.500L11.500 10.500Q10 12.800 7 12.300 4.500 11.500 3 7.500Z" fill="#fff" /></svg>
      <div class="task t1"><svg class="dim"><use href="#chrome" /></svg><span>[Mosaking in SAGAGIS 2.3.1 -...</span></div>
      <div class="task t2"><svg><use href="#chrome" /></svg><span>Cómo hacer un mosaico de i...</span></div>
      <div class="task t3"><svg viewBox="0 0 16 16"><circle cx="8" cy="7.500" r="5.700" fill="none" stroke="#7fae24" stroke-width="3" /><path d="M8 7.500L14.500 14.500" stroke="#4d8a14" stroke-width="3" /><path d="M6.500 6h3v3h-3z" fill="#e8b020" /></svg><span>*Proyecto sin título - QGIS</span></div>
      <div class="task t4"><svg viewBox="0 0 16 16"><circle cx="8" cy="8" r="7" fill="#7fb4e2" /><path d="M13.500 3.500Q8-1 3 4T3.500 12.500 12.500 12.500L13.500 8H6M12 5.500Q8 3 5 6T7 11H11" fill="none" stroke="#0b548f" stroke-width="2" /></svg><span>SAGA</span></div>
      <div class="task t5"><svg viewBox="0 0 16 16"><path d="M1 3h5l1.500 1H15v9.500H1z" fill="#30508f" /></svg><span>[Mosaico - Administrador de ...</span></div>
      <svg class="i-search" viewBox="0 0 12 12"><circle cx="4.500" cy="4.500" r="3.300" fill="none" stroke="#d3dae3" stroke-width="1.600" /><path d="M7 7L10.500 10.500" stroke="#d3dae3" stroke-width="2" /></svg>
      <svg class="i-folder" viewBox="0 0 18 17"><path d="M2 1h6l1 2h7v4H2z" fill="#3f7fe8" /><path d="M2 4h14v4H2z" fill="#fff" /><path d="M0 5.500h18v10q0 1-1 1H1q-1 0-1-1z" fill="#e9e9ea" /><path d="M5 8h8" stroke="#bbb" /></svg>
      <svg class="i-bt" viewBox="0 0 12 16"><rect x=".5" width="11" height="16" rx="5.500" fill="#e8ecf2" /><path d="M3 5L8.500 10.500 6 13V3L8.500 5.500 3 11" fill="none" stroke="#2b2e39" stroke-width="1.200" /></svg>
      <svg class="i-wifi" viewBox="0 0 22 18"><path d="M0 5Q10-4 20 5L10 15Z" fill="#55585f" /><path d="M2 7Q10 .500 18 7L10 15Z" fill="#f4f5f7" /><path d="M3.500 8.200Q10 3.500 16.500 8.200" stroke="#a9adb8" fill="none" /><path d="M8 11h13v7H8z" fill="#3b78e0" /><text x="14.500" y="17" text-anchor="middle">100</text></svg>
      <svg class="i-bell" viewBox="0 0 14 16"><path d="M7 0q1 0 1.200 1.500Q11.500 2.500 11.500 7V10L13.500 13H.5L2.500 10V7Q2.500 2.500 5.800 1.500 6 0 7 0ZM5.500 14h3q0 1.500-1.500 1.500T5.500 14Z" fill="#c3c8d6" /></svg>
      <svg class="i-mail" viewBox="0 0 16 12"><rect width="16" height="12" rx="1.500" fill="#fff" /><path d="M2 2.500L8 6.500 14 2.500" stroke="#2b2e39" stroke-width="1.400" fill="none" /></svg>
      <svg class="i-bat" viewBox="0 0 10 14"><path d="M3 0h4v1h3v13H0V1h3z" fill="#5d6270" /><path d="M0 6h10v8H0z" fill="#c3c8d6" /></svg>
      <svg class="i-vol" viewBox="0 0 15 14"><path d="M0 4.500H3L7 .5V13.500L3 9.500H0Z" fill="#c3c8d6" /><path d="M9 4.500Q10.500 7 9 9.500M10.500 1Q16 7 10.500 13" stroke="#c3c8d6" fill="none" stroke-width="1.500" /></svg>
      <span class="clock">23 nov, 08:13</span>
    </header>

    <div class="titlebar">
      <svg class="caret" viewBox="0 0 8 5"><path d="M0 0H8L4 5Z" fill="#5c616c" /></svg>
      <b>SAGA</b>
      <svg class="winbtns" viewBox="0 0 54 10"><path d="M1 5H9M23 5H31M27 1V9M46 1.500L53 8.500M53 1.500L46 8.500" stroke="#666a72" stroke-width="1.900" /></svg>
    </div>

    <nav class="menubar"><span v-for="m in menus" :key="m">{{ m }}</span></nav>

    <div class="toolrow">
      <div class="toolbar first">
        <i class="grip"></i>
        <template v-for="(t, i) in fileTools" :key="i">
          <i v-if="t.sep" class="tsep"></i>
          <div v-else class="tbtn" :class="{ on: t.on }"><svg><use :href="'#' + t.icon" /></svg></div>
        </template>
      </div>
      <div class="toolbar second">
        <i class="grip"></i>
        <template v-for="(t, i) in mapTools" :key="i">
          <i v-if="t.sep" class="tsep"></i>
          <div v-else class="tbtn" :class="{ on: t.on }"><svg><use :href="'#' + t.icon" /></svg></div>
        </template>
      </div>
    </div>

    <main class="body">
      <section class="panel manager">
        <div class="caption"><span>Manager</span><svg><use href="#close" /></svg></div>
        <div class="tabs">
          <div class="tab tools"><svg><use href="#gears" /></svg>Tools</div>
          <div class="tab data active"><svg><use href="#layers" /></svg>Data</div>
          <div class="tab maps"><svg><use href="#maps" /></svg>Maps</div>
          <div class="rest"></div>
        </div>
        <div class="sheet">
          <div class="tabs inner">
            <div class="tab treeTab active"><svg><use href="#tree" /></svg>Tree</div>
            <div class="tab thumbs"><svg><use href="#thumbs" /></svg>Thumbnails</div>
          </div>
          <div class="treeframe">
            <div class="tree">
              <div v-for="(r, i) in rows" :key="i" class="trow">
                <svg class="guide" :width="[33, 48, 63, 78][r.level]" height="23">
                  <path :d="r.v" fill="none" stroke="#7d7f82" />
                  <g v-if="r.box">
                    <rect :x="10.500 + r.level * 15" y="6.500" width="10" height="10" rx="1.500" fill="#fff" stroke="#cdd2e2" />
                    <path :d="`M${13 + r.level * 15} 11.500h5`" stroke="#5c616c" />
                  </g>
                </svg>
                <svg class="ticon" :class="r.icon"><use :href="'#' + r.icon" /></svg>
                <span :class="{ sel: r.selected }">{{ r.text }}</span>
              </div>
            </div>
            <div class="hscroll"><i></i></div>
          </div>
        </div>
      </section>

      <div class="split left"><i></i><i></i><i></i></div>

      <section class="center">
        <div class="maptabs">
          <div class="mtab m1"><svg><use href="#mapview" /></svg>03. wasia1_mss [Band 3]</div>
          <div class="mtab m2"><svg><use href="#mapview" /></svg>03. wasia2_mss [Band 3]</div>
          <div class="mtab m3"><svg><use href="#mapview" /></svg>02. Mosaic<em>×</em></div>
        </div>
        <div class="mapwin">
          <canvas ref="raster" class="raster" width="630" height="555"></canvas>
          <svg class="rulers" width="676" height="598">
            <clipPath id="clipSide"><rect x="0" y="20" width="676" height="555" /></clipPath>
            <path d="M5 19.500H669M5 575.500H669M21.500 3V591M652.500 3V591M321.500 3V19M321.500 575V592M5 201.500H21M653 201.500H669" stroke="#000" />
            <g v-for="t in xTicks" :key="t.v">
              <path :d="`M${t.x} 15V19M${t.x} 576V580`" stroke="#000" />
              <text :x="t.x" y="12">{{ t.v }}</text>
              <text :x="t.x" y="589">{{ t.v }}</text>
            </g>
            <g clip-path="url(#clipSide)">
              <g v-for="t in yTicks" :key="t.v">
                <path :d="`M17 ${t.y}H21M653 ${t.y}H657`" stroke="#000" />
                <text :transform="`translate(14 ${t.y}) rotate(-90)`">{{ t.v }}</text>
                <text :transform="`translate(666 ${t.y}) rotate(-90)`">{{ t.v }}</text>
              </g>
            </g>
            <g class="scale">
              <rect x="54.500" y="533.500" width="221" height="4" fill="#fff" stroke="#000" />
              <path d="M54 533h37v5h-37zM128 533h37v5h-37zM202 533h37v5h-37z" fill="#000" />
              <text class="unit" x="180.500" y="530">Kilometers</text>
              <text v-for="t in scaleTicks" :key="t.v" :x="t.x" y="551">{{ t.v }}</text>
            </g>
          </svg>
        </div>
      </section>

      <div class="split right"><i></i><i></i><i></i></div>

      <section class="panel properties">
        <div class="caption"><span>Properties: 02. Mosaic</span><svg><use href="#close" /></svg></div>
        <div class="tabs ptabs">
          <svg class="arrow la" viewBox="0 0 6 10"><path d="M5 1L1 5 5 9" fill="none" stroke="#5c616c" stroke-width="1.600" /></svg>
          <div class="tab ps active"><svg><use href="#glow" /></svg>Settings</div>
          <div class="tab pd"><svg><use href="#info" /></svg>Description</div>
          <div class="tab ph"><svg><use href="#glow" /></svg>History</div>
          <svg class="arrow ra" viewBox="0 0 6 10"><path d="M1 1L5 5 1 9" fill="none" stroke="#5c616c" stroke-width="1.600" /></svg>
        </div>
        <div class="psheet">
          <div class="gridwrap">
            <div class="pgrid">
              <div v-for="(p, i) in props" :key="i" class="prow" :class="[p.kind, 'l' + p.level, { selected: p.selected, indent: p.indent }]">
                <div class="margin">
                  <svg v-if="p.kind === 'cat' || p.box" width="12" height="12"><rect x=".5" y=".5" width="10" height="10" rx="1" fill="#fff" stroke="#cdd2e2" /><path :d="p.box === '+' ? 'M3 5.500h5M5.500 3v5' : 'M3 5.500h5'" stroke="#4b4f58" /></svg>
                </div>
                <div class="pname">{{ p.name }}</div>
                <div v-if="p.kind === 'row'" class="pval">
                  <svg v-if="p.check !== undefined" width="17" height="17"><rect x="1" y="1" width="15" height="15" fill="#fff" stroke="#35373d" stroke-width="1.500" /><path v-if="p.check" d="M4 8.500L7 13 13 4" fill="none" stroke="#35373d" stroke-width="1.600" /></svg>
                  <template v-else>{{ p.value }}</template>
                  <div v-if="p.selected" class="ddbtn"><svg viewBox="0 0 10 6"><path d="M1 1L5 5 9 1" fill="none" stroke="#4b4f58" stroke-width="1.500" /></svg></div>
                </div>
              </div>
            </div>
            <div class="vscroll"><i></i></div>
          </div>
          <div class="desc">
            <p>Type</p>
            <p>Choice</p>
            <p class="rule">___</p>
            <p class="tight">Available Choices:</p>
            <p class="tight">[0] Single Symbol</p>
          </div>
          <div class="buttons">
            <div class="btn off">Apply</div><div class="btn off">Restore</div><div class="btn">Load</div><div class="btn">Save</div>
          </div>
          <div class="popup">
            <div v-for="c in choices" :key="c" :class="{ cur: c === 'Graduated Colors' }">{{ c }}</div>
          </div>
        </div>
      </section>
    </main>

    <footer class="status">
      <span class="s1">ready</span><span class="s2">X 295897.571429</span><span class="s3">Y 4679129.428571</span><span class="s4">Z 77.965164</span><i></i>
    </footer>
  </div>
</template>

<style>
html, body { margin: 0; overflow: hidden; }
</style>

<style scoped>
.defs { position: absolute; }
.screen { width: 1360px; height: 768px; display: flex; flex-direction: column; overflow: hidden; background: #e0e1e3; color: #44474f; font: 700 12px/16px "Noto Sans", sans-serif; white-space: nowrap; }
.screen * { box-sizing: border-box; }
svg { display: block; flex: none; }

.taskbar { height: 25px; flex: none; background: #2b2e39; border-bottom: 1px solid #1d1f27; display: flex; align-items: center; color: #b6bdc9; font-weight: 400; font-size: 12px; padding-left: 4px; }
.whisker { width: 16px; height: 16px; margin-right: 11px; }
.task { height: 24px; display: flex; align-items: center; padding-left: 4px; }
.task svg { width: 16px; height: 16px; margin-right: 9px; }
.dim { opacity: .6; }
.t1, .t2 { width: 200px; padding-left: 5px; }
.t1 svg, .t2 svg { width: 15px; }
.t3 { width: 201px; }
.t4 { width: 200px; background: #5294e2; color: #f0f5fc; }
.t4 svg { margin-left: -1px; }
.t5 { width: 204px; }
.t1 span, .t2 span { letter-spacing: -.03px; }
.t5 span { letter-spacing: -.06px; }
.i-search { width: 11px; height: 11px; margin-left: 4px; }
.i-folder { width: 18px; height: 17px; margin: 0 0 2px 9px; }
.i-bt { width: 12px; height: 16px; margin-left: 61px; }
.i-wifi { width: 21px; height: 18px; margin-left: 8px; }
.i-wifi text { font: 700 6px "DejaVu Sans", sans-serif; fill: #fff; }
.i-bell { width: 14px; height: 16px; margin-left: 6px; }
.i-mail { width: 16px; height: 12px; margin-left: 9px; }
.i-bat { width: 10px; height: 14px; margin-left: 11px; }
.i-vol { width: 15px; height: 14px; margin-left: 12px; }
.clock { margin-left: 13px; }

.titlebar { height: 24px; flex: none; display: grid; grid-template-columns: 1fr auto 1fr; align-items: center; background: linear-gradient(#fbfcfc, #f2f3f4); border-top: 1px solid #fff; padding: 2px 50px 0 6px; color: #5f6168; }
.caret { width: 8px; height: 5px; }
.winbtns { width: 54px; height: 10px; justify-self: end; margin-right: -45px; margin-bottom: 1px; }

.menubar { height: 25px; flex: none; background: #e5e7eb; border-bottom: 1px solid #d4d6da; display: flex; align-items: center; gap: 14.300px; padding: 2px 0 0 7.500px; color: #7a8093; }

.toolrow { height: 40px; flex: none; display: flex; gap: 1px; }
.toolbar { height: 40px; display: flex; align-items: center; gap: 2px; background: #f4f6f8; border-right: 1px solid #a9abae; border-bottom: 1px solid #a9abae; border-top: 1px solid #fff; }
.first { width: 295px; }
.second { width: 474px; }
.grip { width: 9px; height: 38px; margin-right: 4px; padding: 5px 0 4px 4px; background: #e3e5e7; }
.grip::before { content: ""; display: block; width: 2px; height: 29px; background: repeating-linear-gradient(#55575c 0 1px, #8a8c90 1px 2px, transparent 2px 4px); }
.second .grip { margin-right: 3px; }
.tbtn { width: 28px; height: 30px; display: grid; place-items: center; border: 1px solid transparent; border-radius: 2px; }
.tbtn.on { background: #d3d8e2; border-color: #b0b9d2; }
.tbtn svg { width: 16px; height: 16px; }
.tsep { width: 10px; height: 19px; background: linear-gradient(90deg, transparent 4px, #d8dbdf 4px 5px, transparent 5px); }

.body { height: 632px; flex: none; display: flex; }
.panel { background: #f4f6f8; border: 1px solid #a0a2a6; display: flex; flex-direction: column; }
.manager { width: 290px; }
.caption { height: 14px; flex: none; display: flex; align-items: center; justify-content: space-between; padding: 0 4px 0 3px; font: 400 11px/12px "DejaVu Sans", sans-serif; color: #111; }
.caption svg { width: 11px; height: 11px; margin-top: -1px; }
.tabs { height: 32px; flex: none; display: flex; }
.tab { display: flex; align-items: center; border-bottom: 1px solid #dadee6; gap: 3px; padding-top: 4px; }
.tab svg { width: 16px; height: 16px; margin-top: -3px; }
.tab.active { background: #fff; border: 1px solid #dadee6; border-bottom-color: #fff; padding-top: 2px; }
.tools { width: 67px; padding-left: 10px; }
.data { width: 67px; padding-left: 9px; }
.maps { width: 90px; padding-left: 8px; }
.rest { flex: 1; border-bottom: 1px solid #dadee6; }
.sheet { flex: 1; background: #fff; padding: 1px 4px 3px 4px; display: flex; flex-direction: column; }
.sheet, .psheet { border-left: 1px solid #e6e9ee; border-right: 1px solid #e6e9ee; }
.inner { height: 32px; }
.treeTab { width: 64px; padding-left: 9px; }
.thumbs { flex: 1; padding-left: 9px; gap: 2px; }
.treeframe { flex: 1; border: 1px solid #dadee6; border-top: 0; padding: 1px 6px 2px 6px; display: flex; flex-direction: column; background: #fff; }
.tree { flex: 1; background: #f4f6f8; padding-top: 2px; overflow: hidden; }
.trow { height: 23px; display: flex; align-items: center; }
.guide { height: 23px; }
.ticon { width: 16px; height: 16px; margin-right: 1px; }
.ticon.grid { height: 13px; margin-bottom: 1px; }
.trow span { padding: 0 3px; line-height: 23px; height: 23px; }
.trow span.sel { background: #3f85d6; color: #fff; padding-right: 2px; }
.hscroll { height: 13px; flex: none; background: #fafbfc; padding: 5px 0 0; border-top: 1px solid #e6e8ec; }
.hscroll i { display: block; width: 220px; height: 6px; border-radius: 3px; background: #b8babf; }

.split { display: flex; flex-direction: column; align-items: center; justify-content: center; gap: 3px; background: #e3e4e6; }
.split i { width: 2px; height: 2px; background: #cdd3e0; }
.left { width: 7px; }
.right { width: 6px; }

.center { width: 675px; background: #f4f6f8; display: flex; flex-direction: column; }
.maptabs { height: 33px; flex: none; display: flex; }
.mtab { display: flex; align-items: center; padding-top: 9px; gap: 3px; border-bottom: 1px solid #dadee6; }
.mtab svg { width: 16px; height: 13px; margin-top: -3px; }
.m1 { width: 176px; padding-left: 12px; }
.m2 { width: 180px; padding-left: 12px; }
.m3 { width: 114px; height: 32px; margin-top: 2px; background: #fff; border: 1px solid #dadee6; border-bottom: 0; padding: 0 0 1px 7px; }
.m3 em { font-style: normal; color: #ccd0da; }
.maptabs::after { content: ""; flex: 1; border-bottom: 1px solid #dadee6; }
.mapwin { height: 598px; position: relative; background: #fff; border-left: 1px solid #e0e3e8; border-bottom: 1px solid #dadee6; }
.raster { position: absolute; left: 21px; top: 20px; }
.rulers { position: absolute; left: -1px; top: 0; }
.rulers text { font: 400 9.430px "DejaVu Sans", sans-serif; fill: #505258; text-anchor: middle; }
.rulers .scale text { font-size: 12.400px; fill: #111; }
.rulers .scale .unit { font-size: 12px; }

.properties { width: 382px; }
.ptabs { align-items: stretch; }
.arrow { width: 6px; height: 10px; align-self: center; }
.la { margin: 0 5px 3px; }
.ps { width: 112px; padding-left: 9px; gap: 27px; }
.pd { width: 130px; padding-left: 9px; gap: 27px; }
.ph { width: 107px; padding-left: 9px; gap: 28px; }
.ra { margin: 0 0 3px 4px; }
.psheet { position: relative; flex: 1; background: #fff; padding: 1px 4px 3px 4px; display: flex; flex-direction: column; }
.gridwrap { height: 445px; display: flex; overflow: hidden; }
.pgrid { width: 355px; flex: none; height: 445px; overflow: hidden; background: #e2e3e5; border-left: 1px solid #c9ccd0; box-shadow: inset 1px 0 #000; padding-left: 1px; }
.prow { height: 22px; display: flex; align-items: stretch; }
.margin { width: 35px; display: flex; align-items: center; justify-content: flex-end; }
.l2 .margin { width: 54px; }
.cat.l0 .margin { width: 15px; padding-right: 1px; }
.cat.l1 .margin { width: 35px; padding-right: 2px; }
.cat.l2 .margin { padding-right: 2px; }
.pname { width: 148px; padding-left: 5px; line-height: 21px; background: #fff; border-bottom: 1px solid #e2e3e5; }
.l2 .pname { width: 129px; }
.cat .pname { background: none; color: #919499; padding-left: 4px; border: 0; line-height: 22px; }
.cat.l0 .pname { padding-left: 5px; }
.indent .pname { padding-left: 24px; }
.pval { flex: 1; background: #fff; border-left: 1px solid #e2e3e5; border-bottom: 1px solid #e2e3e5; padding-left: 5px; line-height: 21px; display: flex; align-items: center; }
.selected .pname { background: #5294e2; color: #fff; }
.ddbtn { width: 19px; height: 21px; margin: 0 2px 0 auto; background: #d3d8e2; border: 1px solid #b4bcd2; border-radius: 2px; display: grid; place-items: center; }
.ddbtn svg { width: 10px; height: 6px; }
.vscroll { width: 15px; flex: none; margin-left: 2px; border-left: 1px solid #dadee6; padding: 2px 0 0 3px; }
.vscroll i { display: block; width: 6px; height: 402px; border-radius: 3px; background: #b8babf; }
.desc { height: 96px; margin-top: 5px; border: 1px solid #000; background: #f4f6f8; padding: 4px 2px 0; overflow: hidden; }
.desc p { margin: 0; height: 20px; line-height: 20px; }
.desc p.rule { height: 15px; line-height: 13px; font-weight: 400; }
.desc p.tight { height: 17px; line-height: 17px; }
.buttons { display: flex; gap: 4px; padding: 3px 2px 0 2px; background: #f4f6f8; height: 36px; }
.btn { width: 88px; height: 31px; border: 1px solid #cbd2e3; border-radius: 2px; background: #fbfcfc; text-align: center; line-height: 30px; }
.btn.off { color: #acaeb5; border-color: #dfe3ec; }
.popup { position: absolute; left: 191px; top: 396px; width: 168px; height: 149px; border: 1px solid #000; background: #fff; box-shadow: 0 3px 14px rgba(0, 0, 0, .6); }
.popup div { height: 21px; line-height: 21px; padding-left: 4px; }
.popup .cur { background: #5294e2; color: #fff; }

.status { flex: 1; background: #f4f6f8; display: flex; align-items: center; padding: 0 2px 0 5px; }
.status span { padding-top: 1px; }
.s1 { width: 492px; } .s2 { width: 125px; } .s3 { width: 125px; } .s4 { width: 123px; }
.status i { flex: 1; height: 17px; background: #ced5e5; border: 1px solid #b9c6df; border-radius: 2px; }
</style>
